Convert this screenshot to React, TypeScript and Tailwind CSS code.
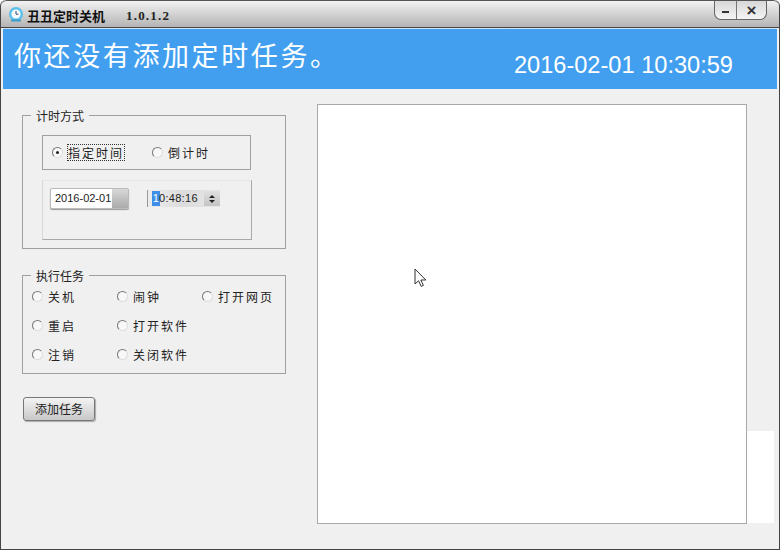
import React from 'react';

const cjk = "font-['Noto_Sans_CJK_SC',sans-serif]";

const Radio = ({ label, checked, focus }: { label: string; checked?: boolean; focus?: boolean }) => (
  <div className="flex items-center h-[17px]">
    <span className="relative w-[11px] h-[11px] rounded-full border border-t-[#777] border-l-[#777] border-r-[#ddd] border-b-[#ddd] bg-[#f8f8f8] shrink-0 flex items-center justify-center">
      {checked && <span className="w-[3px] h-[3px] rounded-full bg-[#222]" />}
    </span>
    <span
      className={
        'ml-[5px] text-[12px] leading-[15px] tracking-[2px] text-[#222] whitespace-nowrap ' +
        (focus ? 'outline-1 outline-dotted outline-[#333]' : '')
      }
    >
      {label}
    </span>
  </div>
);

const Group = ({ title, className, children }: { title: string; className: string; children: React.ReactNode }) => (
  <div className={'relative w-[264px] border border-[#a0a0a0] ' + className}>
    <span className="absolute left-[8px] top-[-8px] bg-[#f0f0f0] px-[5px] text-[12px] leading-[15px] text-[#222]">
      {title}
    </span>
    {children}
  </div>
);

export default function App() {
  return (
    <div className={'w-[780px] h-[550px] flex flex-col bg-[#f0f0f0] overflow-hidden rounded-t-[6px] border-x border-b border-[#444] ' + cjk}>
      {/* title bar */}
      <div className="h-[28px] shrink-0 flex items-start border-t border-[#555] rounded-t-[6px] bg-gradient-to-b from-[#f2f2f2] to-[#b4b4b4] border-b border-b-[#444]">
        <svg width="17" height="17" viewBox="0 0 17 17" className="ml-[7px] mt-[5px]">
          <circle cx="8" cy="8" r="7" fill="#5cc0e8" />
          <circle cx="8" cy="8" r="4.6" fill="#f4fbff" />
          <path d="M8 5v3.2h2.4" stroke="#446" strokeWidth="1" fill="none" />
          <path d="M3 14.5h10" stroke="#3a9cc8" strokeWidth="2" />
        </svg>
        <span className="ml-[2px] mt-[6px] text-[13px] leading-[17px] font-bold text-[#111] whitespace-nowrap">丑丑定时关机</span>
        <span className="ml-[21px] mt-[6px] text-[13px] leading-[17px] font-bold tracking-[1.2px] text-[#222] font-['Liberation_Serif',serif]">1.0.1.2</span>
        <div className="ml-auto mr-[12px] flex h-[19px] w-[53px] rounded-b-[7px] border border-t-0 border-[#666] bg-gradient-to-b from-[#d8d8d8] to-[#f4f4f4]">
          <span className="w-[22px] border-r border-[#777] flex items-center justify-center pt-[3px]">
            <span className="w-[7px] h-[2px] bg-[#333]" />
          </span>
          <span className="flex-1 flex items-center justify-center text-[17px] leading-none font-bold text-[#333] font-['Liberation_Sans',sans-serif]">
            ×
          </span>
        </div>
      </div>

      {/* banner */}
      <div className="h-[61px] shrink-0 mx-[2px] flex bg-[#429ff0] border-t border-[#cfe4f8] text-white">
        <span className="ml-[11px] mt-[7px] text-[27px] leading-[38px] tracking-[2.6px] font-normal whitespace-nowrap">你还没有添加定时任务。</span>
        <span className="ml-auto mr-[44px] mt-[21px] text-[23.6px] leading-[30px] font-['Liberation_Sans',sans-serif] whitespace-nowrap">
          2016-02-01 10:30:59
        </span>
      </div>

      {/* body */}
      <div className="flex-1 flex pl-[21px] pt-[15px]">
        <div className="w-[264px] pt-[11px] flex flex-col">
          <Group title="计时方式" className="h-[134px] pl-[19px] pt-[19px]">
            <div className="w-[209px] h-[35px] border border-[#a0a0a0] flex items-center pl-[9px] gap-[28px]">
              <Radio label="指定时间" checked focus />
              <Radio label="倒计时" />
            </div>
            <div className="mt-[10px] w-[210px] h-[60px] border-b border-r border-[#a8a8a8] border-l border-l-[#d8d8d8] border-t border-t-[#e4e4e4] flex items-start pl-[7px] pt-[7px]">
              <div className="w-[79px] h-[21px] flex border border-[#bbb] rounded-[2px] bg-white shadow-[0_1px_1px_#999]">
                <span className="flex-1 pl-[4px] text-[11px] leading-[19px] text-[#222] font-['Liberation_Sans',sans-serif]">2016-02-01</span>
                <span className="w-[16px] bg-gradient-to-b from-[#d8d8d8] to-[#aaa]" />
              </div>
              <div className="ml-[18px] mt-[2px] h-[17px] w-[73px] flex items-center border-l border-[#999] bg-gradient-to-r from-[#ececec] via-[#dcdcdc] to-[#e8e8e8] text-[11px] leading-[15px] tracking-[0.3px] text-[#222] font-['Liberation_Sans',sans-serif]">
                <span className="ml-[4px] w-[8px] text-center bg-[#3f8fe8] text-white">1</span>
                <span className="-ml-[1px]">0:48:16</span>
                <span className="ml-auto w-[16px] h-[15px] flex flex-col items-center justify-center gap-[2px] bg-gradient-to-b from-[#e0e0e0] to-[#c4c4c4]">
                  <span className="border-x-[3px] border-b-[3px] border-x-transparent border-b-[#222]" />
                  <span className="border-x-[3px] border-t-[3px] border-x-transparent border-t-[#222]" />
                </span>
              </div>
            </div>
          </Group>

          <Group title="执行任务" className="mt-[26px] h-[99px] pl-[9px] pt-[12px]">
            <div className="grid grid-cols-[85px_85px_auto] gap-y-[12px]">
              <Radio label="关机" />
              <Radio label="闹钟" />
              <Radio label="打开网页" />
              <Radio label="重启" />
              <Radio label="打开软件" />
              <span />
              <Radio label="注销" />
              <Radio label="关闭软件" />
            </div>
          </Group>

          <button className="mt-[23px] ml-[1px] w-[72px] h-[24px] rounded-[3px] border border-[#777] bg-gradient-to-b from-[#f4f4f4] to-[#c8c8c8] shadow-[1px_1px_1px_#aaa] text-[12px] text-[#222]">
            添加任务
          </button>
        </div>

        {/* task list panel */}
        <div className="relative ml-[31px] w-[430px] h-[420px] bg-white border border-[#a8a8a8]">
          <span className="absolute right-[-28px] top-[326px] w-[27px] h-[92px] bg-white" />
          <svg width="14" height="20" viewBox="0 0 14 20" className="absolute left-[96px] top-[163px]">
            <path d="M1 1v15l3.6-3.2 2.6 5.6 2.2-1-2.6-5.4h5z" fill="#fff" stroke="#333" strokeWidth="1" />
          </svg>
        </div>
      </div>
    </div>
  );
}
